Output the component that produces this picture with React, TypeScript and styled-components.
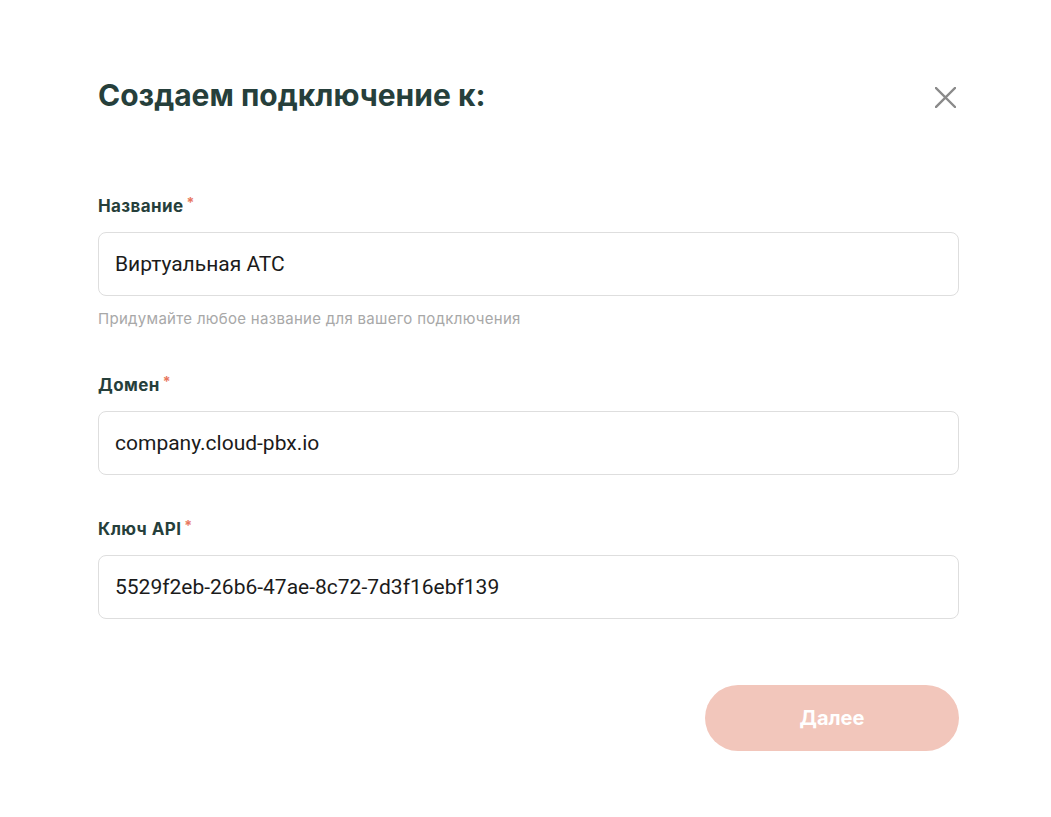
import React from "react";
import styled, { createGlobalStyle } from "styled-components";

const Global = createGlobalStyle`
  html, body { margin: 0; padding: 0; background: #fff; }
  * { box-sizing: border-box; }
`;

const Page = styled.div`
  width: 1051px;
  min-height: 817px;
  padding: 76px 92px 0 98px;
  font-family: Inter, "Noto Sans", sans-serif;
`;

const Header = styled.div`
  display: flex;
  align-items: center;
  justify-content: space-between;
  height: 38px;
`;

const Title = styled.h1`
  margin: 0;
  font-size: 30px;
  line-height: 38px;
  font-weight: 700;
  color: #263f3b;
  letter-spacing: 0;
`;

const CloseButton = styled.button`
  width: 30px;
  height: 30px;
  padding: 0;
  margin-right: -1px;
  margin-top: 4px;
  border: none;
  background: none;
  display: flex;
  align-items: center;
  justify-content: center;
  cursor: pointer;
`;

const Form = styled.div`
  margin-top: 81px;
  display: flex;
  flex-direction: column;
`;

const Field = styled.div<{ $top: number }>`
  display: flex;
  flex-direction: column;
  margin-top: ${(p) => p.$top}px;
`;

const Label = styled.label`
  font-size: 17px;
  line-height: 22px;
  font-weight: 700;
  color: #263f3b;
  letter-spacing: 0.4px;
  margin-bottom: 15px;
`;

const Star = styled.span`
  color: #e8775e;
  font-size: 14px;
  margin-left: 3px;
  vertical-align: top;
  position: relative;
  top: -3px;
`;

const Input = styled.input`
  height: 64px;
  width: 100%;
  border: 1px solid #dedede;
  border-radius: 8px;
  padding: 0 16px;
  font-family: Roboto, sans-serif;
  font-size: 21px;
  color: #1b1b1b;
  outline: none;
  background: #fff;
`;

const Hint = styled.div`
  margin-top: 14px;
  font-size: 15px;
  line-height: 18px;
  letter-spacing: 0.3px;
  color: #a8a8a8;
`;

const Footer = styled.div`
  display: flex;
  justify-content: flex-end;
  margin-top: 66px;
`;

const NextButton = styled.button`
  width: 254px;
  height: 66px;
  border: none;
  border-radius: 33px;
  background: #f2c6bb;
  color: #fff;
  font-family: Inter, sans-serif;
  font-size: 20px;
  font-weight: 700;
  cursor: default;
`;

export default function App() {
  return (
    <>
      <Global />
      <Page>
        <Header>
          <Title>Создаем подключение к:</Title>
          <CloseButton aria-label="Закрыть">
            <svg width="21" height="21" viewBox="0 0 21 21">
              <path d="M1 1 L20 20 M20 1 L1 20" stroke="#8a8a8a" strokeWidth="2.4" strokeLinecap="square" />
            </svg>
          </CloseButton>
        </Header>
        <Form>
          <Field $top={0}>
            <Label>
              Название<Star>*</Star>
            </Label>
            <Input defaultValue="Виртуальная АТС" />
            <Hint>Придумайте любое название для вашего подключения</Hint>
          </Field>
          <Field $top={46}>
            <Label>
              Домен<Star>*</Star>
            </Label>
            <Input defaultValue="company.cloud-pbx.io" />
          </Field>
          <Field $top={43}>
            <Label>
              Ключ API<Star>*</Star>
            </Label>
            <Input defaultValue="5529f2eb-26b6-47ae-8c72-7d3f16ebf139" />
          </Field>
        </Form>
        <Footer>
          <NextButton>Далее</NextButton>
        </Footer>
      </Page>
    </>
  );
}
